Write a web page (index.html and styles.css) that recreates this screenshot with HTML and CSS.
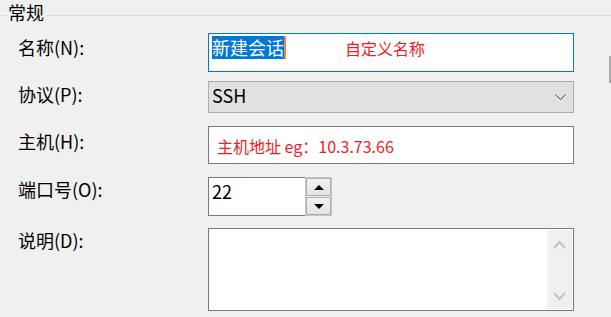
FILE: index.html
```html
<!DOCTYPE html>
<html lang="zh-CN">
<head>
    <meta charset="UTF-8" />
    <title>新建会话</title>
    <link rel="stylesheet" href="styles.css">
</head>
<body>
    <!--常规-->
    <div class="group-head">
        <span class="rule-short"></span>
        <span class="legend">常规</span>
        <span class="rule"></span>
    </div>
    <div class="form">
        <div class="row row-name">
            <label class="label">名称(N):</label>
            <div class="field field-focus">
                <span class="selected">新建会话</span><span class="caret"></span><span class="hint hint-name">自定义名称</span>
            </div>
        </div>
        <div class="row row-proto">
            <label class="label">协议(P):</label>
            <div class="field select">
                <span>SSH</span>
                <svg class="chevron" width="11" height="6" viewBox="0 0 11 6"><path d="M0.5 0.5 L5.5 5.5 L10.5 0.5" fill="none" stroke="#444" stroke-width="1"/></svg>
            </div>
        </div>
        <div class="row row-host">
            <label class="label">主机(H):</label>
            <div class="field host">
                <span class="hint">主机地址 eg：10.3.73.66</span>
            </div>
        </div>
        <div class="row row-port">
            <label class="label">端口号(O):</label>
            <div class="spin">
                <div class="field port">22</div>
                <div class="spin-btns">
                    <div class="spin-btn"><span class="tri-up"></span></div>
                    <div class="spin-btn"><span class="tri-down"></span></div>
                </div>
            </div>
        </div>
        <div class="row row-desc">
            <label class="label">说明(D):</label>
            <div class="field memo">
                <div class="scrollbar">
                    <svg width="13" height="9" viewBox="0 0 13 9"><path d="M1 8 L6.5 2 L12 8" fill="none" stroke="#c2c2c2" stroke-width="2"/></svg>
                    <svg width="13" height="9" viewBox="0 0 13 9"><path d="M1 1 L6.5 7 L12 1" fill="none" stroke="#c2c2c2" stroke-width="2"/></svg>
                </div>
            </div>
        </div>
    </div>
    <span class="edge"></span>
</body>
</html>
```

FILE: styles.css
```css
*{
    margin:0;
    padding:0;
    box-sizing: border-box;
}
body{
    background: #f0f0f0;
    font-family: "Noto Sans CJK SC", "Noto Sans", sans-serif;
    font-size: 18px;
    color: #000;
    width: 611px;
    height: 317px;
    overflow: hidden;
    position: relative;
}
.group-head{
    display: flex;
    align-items: flex-start;
}
.rule-short{
    width: 7px;
    margin-top: 15px;
    border-top: 1px solid #dcdcdc;
}
.legend{
    line-height: 26px;
    margin-top: -1px;
    padding: 0 2px 0 1px;
}
.rule{
    flex: 1;
    margin-top: 15px;
    border-top: 1px solid #dcdcdc;
}
.form{
    padding-left: 18px;
    margin-top: 8px;
}
.row{
    display: flex;
    align-items: flex-start;
}
.label{
    width: 190px;
    line-height: 26px;
}
.field{
    width: 366px;
    background: #fff;
    border: 1px solid #7a7a7a;
}
/*名称*/
.row-name .label{
    margin-top: 1px;
}
.field-focus{
    height: 39px;
    border-color: #0078d7;
    padding: 2px 3px;
    display: flex;
    align-items: flex-start;
}
.selected{
    display: inline-block;
    height: 23px;
    line-height: 23px;
    background: #0078d7;
    color: #fff;
}
.caret{
    display: inline-block;
    width: 2px;
    height: 23px;
    background: #f08a24;
}
.hint{
    color: #ee1c25;
    font-size: 16px;
    line-height: 23px;
}
.hint-name{
    margin-left: 59px;
    margin-top: 1px;
}
/*协议*/
.row-proto{
    margin-top: 9px;
}
.select{
    height: 32px;
    background: #e1e1e1;
    border-color: #adadad;
    line-height: 26px;
    padding: 0 7px 0 3px;
    display: flex;
    justify-content: space-between;
}
.chevron{
    margin-top: 12px;
}
/*主机*/
.row-host{
    margin-top: 13px;
}
.row-host .label{
    margin-top: 2px;
}
.host{
    height: 38px;
    padding: 5px 8px;
}
/*端口*/
.row-port{
    margin-top: 13px;
}
.row-port .label{
    margin-top: -1px;
}
.spin{
    display: flex;
}
.port{
    width: 97px;
    height: 39px;
    line-height: 26px;
    padding: 0 3px;
    border-right: none;
}
.spin-btns{
    width: 27px;
    height: 39px;
    border: 1px solid #c8c8c8;
    display: flex;
    flex-direction: column;
    gap: 1px;
}
.spin-btn{
    flex: 1;
    border: 1px solid #adadad;
    background: linear-gradient(#f2f2f2, #e3e3e3);
    display: flex;
    align-items: center;
    justify-content: center;
}
.tri-up{
    width: 0;
    height: 0;
    border-left: 5px solid transparent;
    border-right: 5px solid transparent;
    border-bottom: 5px solid #000;
}
.tri-down{
    width: 0;
    height: 0;
    border-left: 5px solid transparent;
    border-right: 5px solid transparent;
    border-top: 5px solid #000;
}
/*说明*/
.row-desc{
    margin-top: 12px;
}
.row-desc .label{
    margin-top: -1px;
}
.memo{
    height: 83px;
    padding: 1px;
    display: flex;
    justify-content: flex-end;
}
.scrollbar{
    width: 25px;
    background: #f0f0f0;
    display: flex;
    flex-direction: column;
    align-items: center;
    justify-content: space-between;
    padding: 10px 0 8px;
}
.edge{
    position: absolute;
    left: 609px;
    top: 56px;
    width: 2px;
    height: 27px;
    background: #ababab;
}
```
